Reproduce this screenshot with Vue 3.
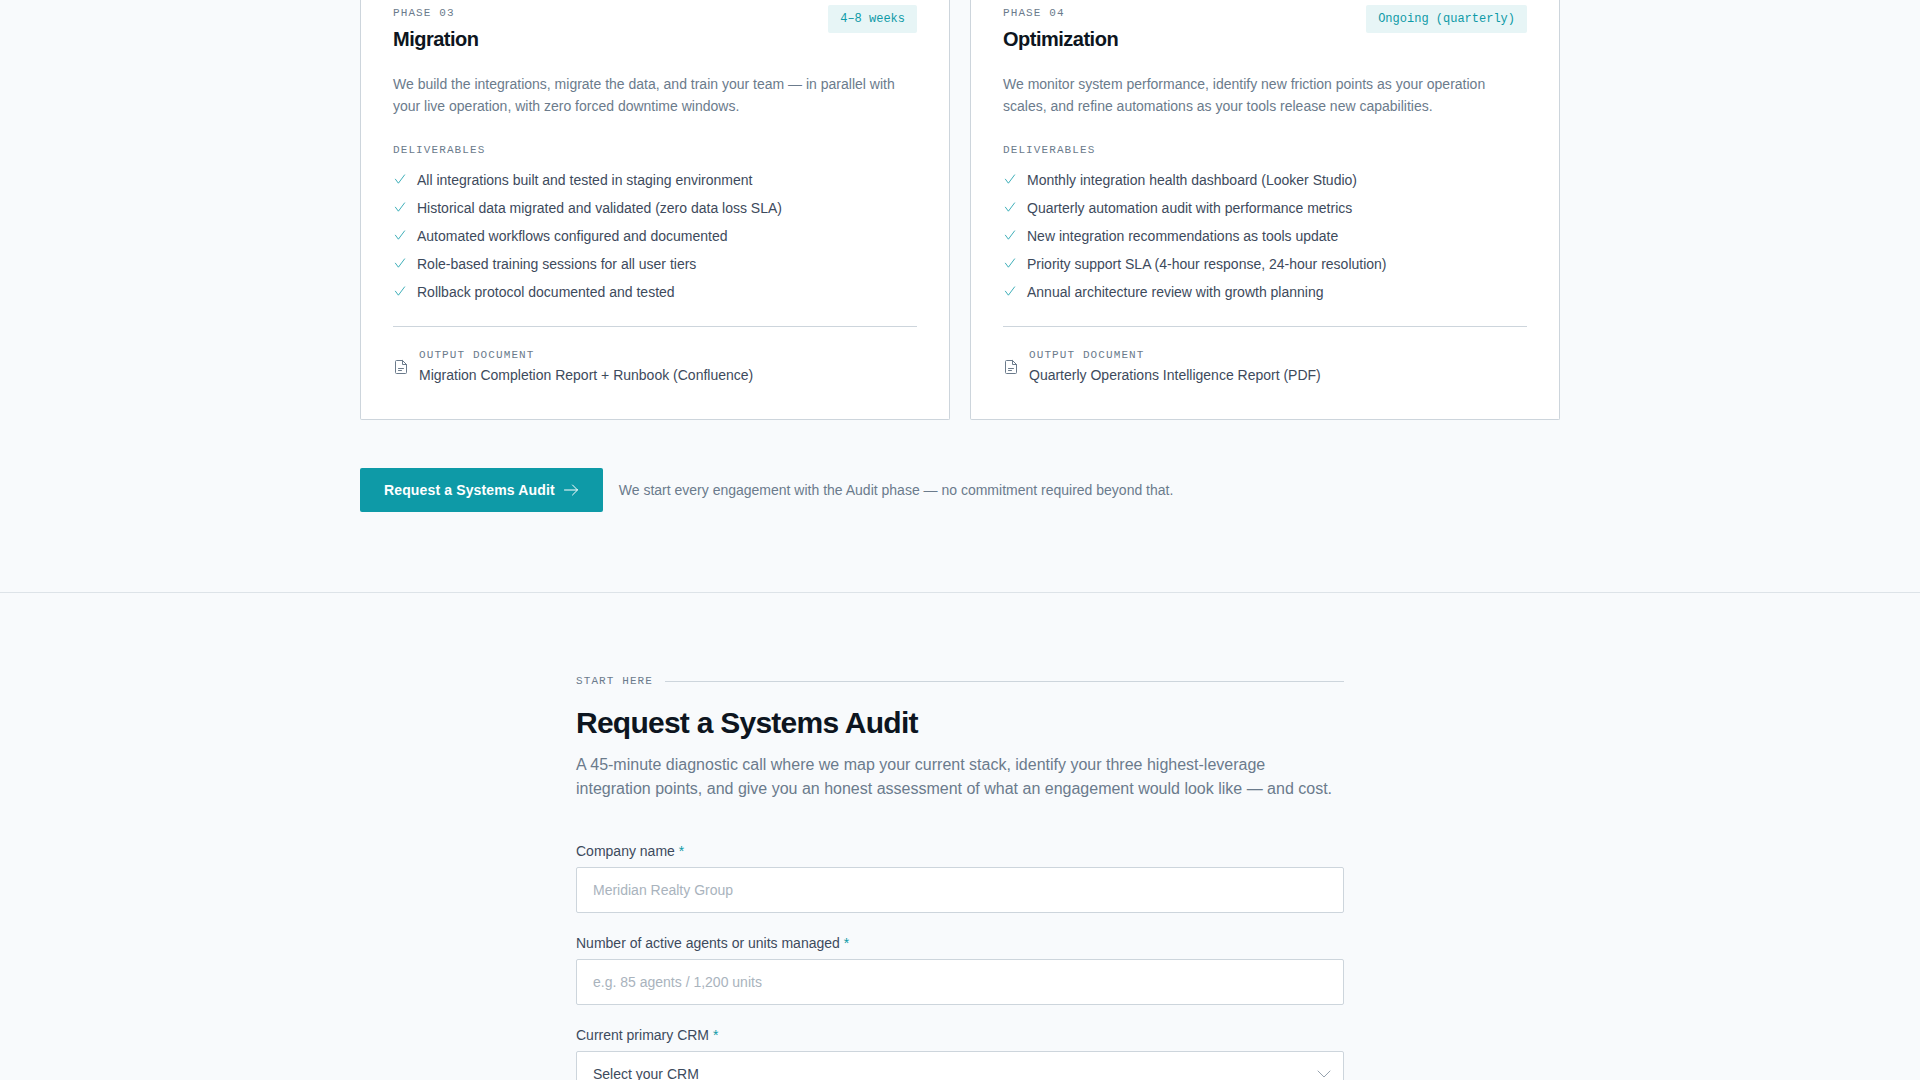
<script setup>
import { ref } from 'vue'

const phases = [
  {
    number: 'Phase 03',
    title: 'Migration',
    duration: '4–8 weeks',
    description:
      'We build the integrations, migrate the data, and train your team — in parallel with your live operation, with zero forced downtime windows.',
    deliverables: [
      'All integrations built and tested in staging environment',
      'Historical data migrated and validated (zero data loss SLA)',
      'Automated workflows configured and documented',
      'Role-based training sessions for all user tiers',
      'Rollback protocol documented and tested',
    ],
    output: 'Migration Completion Report + Runbook (Confluence)',
  },
  {
    number: 'Phase 04',
    title: 'Optimization',
    duration: 'Ongoing (quarterly)',
    description:
      'We monitor system performance, identify new friction points as your operation scales, and refine automations as your tools release new capabilities.',
    deliverables: [
      'Monthly integration health dashboard (Looker Studio)',
      'Quarterly automation audit with performance metrics',
      'New integration recommendations as tools update',
      'Priority support SLA (4-hour response, 24-hour resolution)',
      'Annual architecture review with growth planning',
    ],
    output: 'Quarterly Operations Intelligence Report (PDF)',
  },
]

const company = ref('')
const size = ref('')
const crm = ref('')
</script>

<template>
  <main class="page">
    <section class="process">
      <div class="process-inner">
        <div class="cards">
          <article v-for="phase in phases" :key="phase.title" class="card">
            <header class="card-head">
              <div>
                <p class="eyebrow">{{ phase.number }}</p>
                <h3 class="card-title">{{ phase.title }}</h3>
              </div>
              <span class="chip">{{ phase.duration }}</span>
            </header>
            <p class="description">{{ phase.description }}</p>
            <p class="eyebrow list-label">Deliverables</p>
            <ul class="deliverables">
              <li v-for="item in phase.deliverables" :key="item">
                <svg class="tick" viewBox="0 0 14 14" aria-hidden="true">
                  <path d="M2.4 6.2 5.4 10.2 11.6 1.9" />
                </svg>
                <span>{{ item }}</span>
              </li>
            </ul>
            <footer class="output">
              <svg class="doc" viewBox="0 0 16 16" aria-hidden="true">
                <path d="M9.5 1.5h-6a1 1 0 0 0-1 1v11a1 1 0 0 0 1 1h9a1 1 0 0 0 1-1v-8l-4-4Z" />
                <path d="M9.5 1.5v4h4M5.5 9.5h5M5.5 11.5h3" />
              </svg>
              <div>
                <p class="eyebrow">Output document</p>
                <p class="output-name">{{ phase.output }}</p>
              </div>
            </footer>
          </article>
        </div>
        <div class="cta">
          <a class="cta-button" href="#audit">
            Request a Systems Audit
            <svg viewBox="0 0 16 16" aria-hidden="true">
              <path d="M1.5 8h13M9.5 3l5 5-5 5" />
            </svg>
          </a>
          <p class="cta-note">We start every engagement with the Audit phase — no commitment required beyond that.</p>
        </div>
      </div>
    </section>

    <section id="audit" class="audit">
      <div class="audit-inner">
        <div class="section-label">
          <span class="eyebrow">Start here</span>
          <span class="rule"></span>
        </div>
        <h2 class="audit-title">Request a Systems Audit</h2>
        <p class="lead">
          A 45-minute diagnostic call where we map your current stack, identify your three
          highest-leverage integration points, and give you an honest assessment of what an
          engagement would look like — and cost.
        </p>
        <form class="form" @submit.prevent>
          <div class="field">
            <label for="company">Company name <span class="required">*</span></label>
            <input id="company" v-model="company" type="text" placeholder="Meridian Realty Group" required />
          </div>
          <div class="field">
            <label for="size">Number of active agents or units managed <span class="required">*</span></label>
            <input id="size" v-model="size" type="text" placeholder="e.g. 85 agents / 1,200 units" required />
          </div>
          <div class="field">
            <label for="crm">Current primary CRM <span class="required">*</span></label>
            <div class="select-wrap">
              <select id="crm" v-model="crm" required>
                <option value="">Select your CRM</option>
              </select>
              <svg class="chevron" viewBox="0 0 16 16" aria-hidden="true">
                <path d="M2 5l6 6 6-6" />
              </svg>
            </div>
          </div>
        </form>
      </div>
    </section>
  </main>
</template>

<style>
body {
  margin: 0;
  background: #f8fafc;
}
</style>

<style scoped>
.page {
  height: 100vh;
  overflow: hidden;
  background: #f8fafc;
  color: #3d4a5c;
  font-family: "Liberation Sans", Arial, sans-serif;
  font-size: 14px;
  line-height: 22px;
}

p,
h2,
h3,
ul {
  margin: 0;
  padding: 0;
}

svg {
  flex: none;
  fill: none;
  stroke: currentColor;
  stroke-linecap: round;
  stroke-linejoin: round;
}

.eyebrow {
  color: #6b7b8c;
  font-family: "Liberation Mono", monospace;
  font-size: 11px;
  line-height: 16px;
  letter-spacing: 0.1em;
  text-transform: uppercase;
}

.process {
  padding: 0 24px 80px;
  border-bottom: 1px solid #dde3e8;
}

.process-inner {
  max-width: 1200px;
  margin: 0 auto;
}

.cards {
  display: grid;
  grid-template-columns: 1fr 1fr;
  gap: 20px;
}

.card {
  padding: 5px 32px 32px;
  background: #fff;
  border: 1px solid #cdd5dc;
  border-top: 0;
  border-radius: 0 0 2px 2px;
}

.card-head {
  display: flex;
  align-items: flex-start;
  justify-content: space-between;
}

.card-title {
  margin-top: 4px;
  color: #0d1520;
  font-size: 20px;
  line-height: 28px;
  letter-spacing: -0.025em;
}

.chip {
  padding: 4px 12px;
  background: #e7f5f6;
  border-radius: 2px;
  color: #0e9aa7;
  font-family: "Liberation Mono", monospace;
  font-size: 12px;
  line-height: 20px;
}

.description {
  margin-top: 20px;
  color: #6b7b8c;
}

.list-label {
  margin-top: 25px;
}

.deliverables {
  display: flex;
  flex-direction: column;
  gap: 6px;
  margin-top: 11px;
  list-style: none;
}

.deliverables li {
  display: flex;
  align-items: center;
  gap: 10px;
}

.tick {
  width: 14px;
  height: 14px;
  color: #0e9aa7;
  stroke-width: 0.8;
}

.output {
  display: flex;
  align-items: center;
  gap: 10px;
  margin-top: 23px;
  padding-top: 20px;
  border-top: 1px solid #cdd5dc;
}

.output-name {
  line-height: 24px;
}

.doc {
  width: 16px;
  height: 16px;
  color: #6b7b8c;
}

.cta {
  display: flex;
  align-items: center;
  gap: 16px;
  margin-top: 48px;
}

.cta-button {
  display: flex;
  align-items: center;
  gap: 8px;
  padding: 11px 24px;
  background: #0e9aa7;
  border-radius: 2px;
  color: #fff;
  font-weight: 700;
  letter-spacing: 0.01em;
  text-decoration: none;
}

.cta-button svg {
  width: 16px;
  height: 16px;
}

.cta-note {
  color: #6b7b8c;
}

.audit {
  padding: 80px 24px;
}

.audit-inner {
  max-width: 768px;
  margin: 0 auto;
}

.section-label {
  display: flex;
  align-items: center;
  gap: 12px;
}

.rule {
  flex: 1;
  height: 1px;
  background: #cdd5dc;
}

.audit-title {
  margin-top: 16px;
  color: #0d1520;
  font-size: 30px;
  line-height: 36px;
  letter-spacing: -0.025em;
}

.lead {
  margin-top: 12px;
  color: #6b7b8c;
  font-size: 16px;
  line-height: 24px;
}

.form {
  display: flex;
  flex-direction: column;
  gap: 20px;
  margin-top: 40px;
}

.field {
  display: flex;
  flex-direction: column;
  gap: 6px;
}

label {
  line-height: 20px;
}

.required {
  color: #0e9aa7;
}

input,
select {
  box-sizing: border-box;
  width: 100%;
  height: 46px;
  padding: 0 16px;
  background: #fff;
  border: 1px solid #cdd5dc;
  border-radius: 2px;
  color: #3d4a5c;
  font: inherit;
  appearance: none;
}

input::placeholder {
  color: #a9b3bd;
  opacity: 1;
}

.select-wrap {
  position: relative;
}

.chevron {
  position: absolute;
  top: 15px;
  right: 12px;
  width: 16px;
  height: 16px;
  color: #97a3af;
  pointer-events: none;
}
</style>
